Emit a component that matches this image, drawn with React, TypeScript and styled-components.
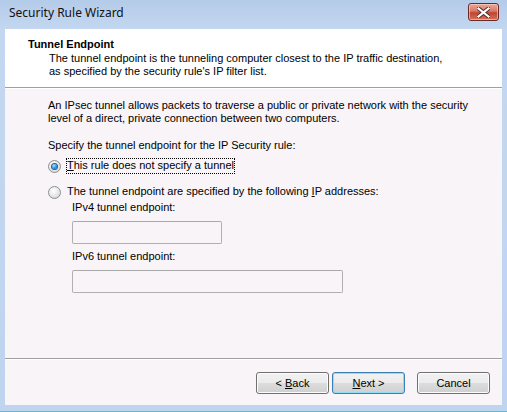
import { createGlobalStyle, styled } from "styled-components";

const GlobalStyle = createGlobalStyle`
  html, body {
    margin: 0;
    padding: 0;
    background: #bfd4ef;
  }
  * {
    box-sizing: border-box;
  }
`;

const Window = styled.div`
  width: 507px;
  height: 412px;
  display: flex;
  flex-direction: column;
  background: linear-gradient(to bottom, #b4cbe9 0px, #c3d7f0 30px, #bfd4ef 100%);
  border-bottom: 1px solid #3ec6e6;
  padding: 0 5px 6px 5px;
  font-family: "Liberation Sans", Arial, sans-serif;
  font-size: 11px;
  color: #000;
`;

const TitleBar = styled.div`
  height: 29px;
  display: flex;
  align-items: center;
  justify-content: space-between;
  padding: 1px 3px 2px 4px;
`;

const Caption = styled.span`
  font-family: "Noto Sans", "Open Sans", sans-serif;
  font-size: 12px;
  color: #111;
  margin-top: -3px;
`;

const CloseButton = styled.div`
  width: 31px;
  height: 18px;
  margin-top: -4px;
  border: 1px solid #6b2a26;
  border-radius: 3px;
  background: linear-gradient(to bottom, #e9a899 0%, #d77966 45%, #c0442f 55%, #d5745c 100%);
  box-shadow: inset 0 0 0 1px rgba(255, 220, 210, 0.55);
  display: flex;
  align-items: center;
  justify-content: center;
`;

const Client = styled.div`
  flex: 1;
  display: flex;
  flex-direction: column;
  background: #f8f4f8;
`;

const Header = styled.div`
  height: 59px;
  background: #fff;
  border-bottom: 1px solid #a0a0a0;
  box-shadow: 0 1px 0 #fff;
  padding: 9px 0 0 23px;
  line-height: 13px;
`;

const HeaderTitle = styled.div`
  font-weight: bold;
`;

const HeaderText = styled.div`
  margin: 1px 0 0 21px;
`;

const Body = styled.div`
  flex: 1;
  padding: 11px 0 0 43px;
  line-height: 13px;
`;

const Paragraph = styled.p<{ $gap?: number }>`
  margin: 0 0 ${(p) => p.$gap ?? 0}px 0;
`;

const RadioRow = styled.div<{ $gap: number }>`
  display: flex;
  align-items: center;
  gap: 5px;
  margin-bottom: ${(p) => p.$gap}px;
`;

const RadioCircle = styled.span<{ $checked?: boolean }>`
  width: 13px;
  height: 13px;
  border-radius: 50%;
  border: 1px solid #8e8f8f;
  background: radial-gradient(circle at 40% 35%, #ffffff 0%, #e6e6e6 55%, #c9c9c9 100%);
  display: flex;
  align-items: center;
  justify-content: center;
  flex-shrink: 0;

  &::after {
    content: "";
    display: ${(p) => (p.$checked ? "block" : "none")};
    width: 5px;
    height: 5px;
    border-radius: 50%;
    background: radial-gradient(circle at 40% 35%, #a8e4ff 0%, #2a8ed8 55%, #0b4f96 100%);
    box-shadow: 0 0 0 1px #1d5f9e;
  }
`;

const RadioLabel = styled.span<{ $focused?: boolean }>`
  padding: 1px 1px 2px 1px;
  outline: ${(p) => (p.$focused ? "1px dotted #000" : "none")};
  outline-offset: -1px;
`;

const Key = styled.span`
  text-decoration: underline;
`;

const Fields = styled.div`
  padding-left: 24px;
`;

const FieldLabel = styled.div`
  margin-bottom: 7px;
`;

const TextBox = styled.div<{ $width: number; $gap: number }>`
  width: ${(p) => p.$width}px;
  height: 23px;
  border: 1px solid #b0b0b0;
  border-top-color: #a9a9a9;
  border-radius: 2px;
  background: #f8f4f8;
  margin-bottom: ${(p) => p.$gap}px;
`;

const Separator = styled.div`
  height: 2px;
  border-top: 1px solid #a0a0a0;
  border-bottom: 1px solid #fff;
`;

const ButtonRow = styled.div`
  height: 45px;
  display: flex;
  justify-content: flex-end;
  align-items: flex-start;
  padding: 12px 12px 0 0;
`;

const Button = styled.div<{ $default?: boolean; $gap?: number }>`
  width: 73px;
  height: 22px;
  margin-left: ${(p) => p.$gap ?? 0}px;
  border: 1px solid ${(p) => (p.$default ? "#3c7fb1" : "#707070")};
  border-radius: 3px;
  background: linear-gradient(to bottom, #f2f2f2 0%, #ebebeb 49%, #dddddd 50%, #cfcfcf 100%);
  box-shadow: inset 0 0 0 1px ${(p) => (p.$default ? "#8fdcf7" : "#fcfcfc")};
  display: flex;
  align-items: center;
  justify-content: center;
  gap: 3px;
  line-height: 13px;
`;

const CloseGlyph = () => (
  <svg width="13" height="11" viewBox="0 0 13 11">
    <path
      d="M1.5 1.5 L11.5 9.5 M11.5 1.5 L1.5 9.5"
      stroke="#4a2a2a"
      strokeWidth="4"
      strokeLinecap="square"
    />
    <path
      d="M1.5 1.5 L11.5 9.5 M11.5 1.5 L1.5 9.5"
      stroke="#ffffff"
      strokeWidth="2.2"
      strokeLinecap="square"
    />
  </svg>
);

const App = () => {
  return (
    <>
      <GlobalStyle />
      <Window>
        <TitleBar>
          <Caption>Security Rule Wizard</Caption>
          <CloseButton>
            <CloseGlyph />
          </CloseButton>
        </TitleBar>
        <Client>
          {/* 머리말 */}
          <Header>
            <HeaderTitle>Tunnel Endpoint</HeaderTitle>
            <HeaderText>
              The tunnel endpoint is the tunneling computer closest to the IP traffic destination,
              <br />
              as specified by the security rule's IP filter list.
            </HeaderText>
          </Header>
          {/* 내용 */}
          <Body>
            <Paragraph $gap={14}>
              An IPsec tunnel allows packets to traverse a public or private network with the security
              <br />
              level of a direct, private connection between two computers.
            </Paragraph>
            <Paragraph $gap={6}>Specify the tunnel endpoint for the IP Security rule:</Paragraph>
            <RadioRow $gap={10}>
              <RadioCircle $checked />
              <RadioLabel $focused>
                <Key>T</Key>his rule does not specify a tunnel
              </RadioLabel>
            </RadioRow>
            <RadioRow $gap={1}>
              <RadioCircle />
              <RadioLabel>
                The tunnel endpoint are specified by the following <Key>I</Key>P addresses:
              </RadioLabel>
            </RadioRow>
            <Fields>
              <FieldLabel>IPv4 tunnel endpoint:</FieldLabel>
              <TextBox $width={150} $gap={6} />
              <FieldLabel>IPv6 tunnel endpoint:</FieldLabel>
              <TextBox $width={271} $gap={0} />
            </Fields>
          </Body>
          {/* 버튼 */}
          <Separator />
          <ButtonRow>
            <Button>
              <span>&lt;</span>
              <span>
                <Key>B</Key>ack
              </span>
            </Button>
            <Button $default $gap={3}>
              <span>
                <Key>N</Key>ext
              </span>
              <span>&gt;</span>
            </Button>
            <Button $gap={12}>Cancel</Button>
          </ButtonRow>
        </Client>
      </Window>
    </>
  );
};

export default App;
